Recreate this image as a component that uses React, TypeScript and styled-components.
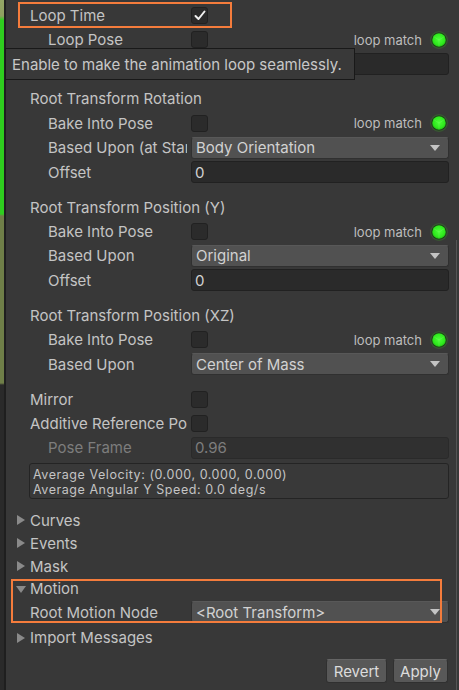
import React from "react";
import styled, { createGlobalStyle } from "styled-components";

const Global = createGlobalStyle`
  html, body { margin: 0; padding: 0; background: #383838; }
  body { font-family: Inter, "Noto Sans", sans-serif; color: #c4c4c4; }
  * { box-sizing: border-box; }
`;

const App = styled.div`
  position: relative;
  display: flex;
  width: 459px;
  height: 690px;
  overflow: hidden;
  background: #383838;
  font-size: 15px;
`;

const LeftStrip = styled.div`
  width: 4px;
  flex: none;
  background: linear-gradient(
    to bottom,
    #93a565 0px,
    #8fa060 16px,
    #2fce1f 20px,
    #2fce1f 214px,
    #6f7f48 216px,
    #6f7f48 383px,
    #2a2a2a 385px,
    #2a2a2a 690px
  );
`;

const LeftEdge = styled.div`
  width: 2px;
  flex: none;
  background: #1f1f1f;
`;

const Panel = styled.div`
  flex: 1;
  display: flex;
  flex-direction: column;
  padding-top: 3px;
`;

const ScrollBar = styled.div`
  width: 3px;
  flex: none;
  display: flex;
  flex-direction: column;
  &::before {
    content: "";
    height: 240px;
  }
`;

const ScrollThumb = styled.div`
  flex: 1;
  width: 1px;
  background: #555555;
`;

const Row = styled.div<{ $gap?: boolean }>`
  display: grid;
  grid-template-columns: 185px 1fr;
  align-items: center;
  height: 24.4px;
  padding-right: 7px;
  margin-top: ${(p) => (p.$gap ? 10.6 : 0)}px;
`;

const Label = styled.div<{ $indent: number; $dim?: boolean }>`
  padding-left: ${(p) => p.$indent}px;
  margin-right: 4px;
  white-space: nowrap;
  overflow: hidden;
  color: ${(p) => (p.$dim ? "#7d7d7d" : "#c4c4c4")};
`;

const Header = styled.div`
  height: 24.4px;
  display: flex;
  align-items: center;
  padding-left: 24px;
  margin-top: 10.6px;
`;

const Field = styled.div`
  display: flex;
  align-items: center;
  justify-content: space-between;
  min-width: 0;
`;

const Check = styled.div`
  width: 17px;
  height: 17px;
  border-radius: 3px;
  background: #2b2b2b;
  border: 1px solid #212121;
  display: flex;
  align-items: center;
  justify-content: center;
`;

const LoopMatch = styled.div`
  display: flex;
  align-items: center;
  gap: 8px;
  font-size: 13px;
  color: #bdbdbd;
  margin-right: 1px;
`;

const Dropdown = styled.div`
  flex: 1;
  height: 22px;
  border-radius: 3px;
  background: #515151;
  border: 1px solid #303030;
  border-top-color: #585858;
  display: flex;
  align-items: center;
  justify-content: space-between;
  padding: 0 8px 0 4px;
  color: #d2d2d2;
`;

const Input = styled.div<{ $disabled?: boolean }>`
  flex: 1;
  height: 22px;
  border-radius: 3px;
  background: ${(p) => (p.$disabled ? "#303030" : "#2a2a2a")};
  border: 1px solid ${(p) => (p.$disabled ? "#2a2a2a" : "#212121")};
  display: flex;
  align-items: center;
  padding: 0 3px;
  color: ${(p) => (p.$disabled ? "#7d7d7d" : "#d2d2d2")};
`;

const InfoBox = styled.div`
  margin: 3px 7px 0 23px;
  height: 36px;
  border-radius: 3px;
  background: #393939;
  border: 1px solid #242424;
  padding: 3px 3px;
  font-size: 12.5px;
  line-height: 15px;
  color: #c4c4c4;
  letter-spacing: 0.55px;
  white-space: nowrap;
`;

const Foldouts = styled.div`
  margin-top: 10px;
  display: flex;
  flex-direction: column;
`;

const Foldout = styled.div<{ $gap?: boolean }>`
  height: 22.8px;
  display: flex;
  align-items: center;
  padding-left: 10px;
  gap: 4px;
  margin-top: ${(p) => (p.$gap ? 2 : 0)}px;
`;

const Buttons = styled.div`
  display: flex;
  justify-content: flex-end;
  gap: 6px;
  padding-right: 8px;
  margin-top: 10px;
`;

const Button = styled.div<{ $w: number }>`
  width: ${(p) => p.$w}px;
  height: 24px;
  border-radius: 3px;
  background: #585858;
  border: 1px solid #303030;
  border-top-color: #656565;
  display: flex;
  align-items: center;
  justify-content: center;
  color: #dcdcdc;
`;

const Tooltip = styled.div`
  position: absolute;
  left: 5px;
  top: 48px;
  width: 350px;
  height: 32px;
  background: #393939;
  border: 1px solid #191919;
  display: flex;
  align-items: center;
  padding-left: 6px;
  color: #c8c8c8;
  white-space: nowrap;
`;

const Highlight = styled.div<{ $x: number; $y: number; $w: number; $h: number }>`
  position: absolute;
  left: ${(p) => p.$x}px;
  top: ${(p) => p.$y}px;
  width: ${(p) => p.$w}px;
  height: ${(p) => p.$h}px;
  border: 2px solid #f47c3c;
  pointer-events: none;
`;

const CheckMark = () => (
  <svg width="12" height="11" viewBox="0 0 12 11">
    <path d="M1.5 6 L4.5 9 L10.5 1.5" fill="none" stroke="#f0f0f0" strokeWidth="2" strokeLinecap="round" strokeLinejoin="round" />
  </svg>
);

const Dot = () => (
  <svg width="18" height="18" viewBox="0 0 18 18">
    <defs>
      <radialGradient id="dg" cx="50%" cy="45%" r="55%">
        <stop offset="0%" stopColor="#4cff38" />
        <stop offset="75%" stopColor="#2ee81c" />
        <stop offset="100%" stopColor="#1fb812" />
      </radialGradient>
    </defs>
    <circle cx="9" cy="9" r="9" fill="#3a7a2c" opacity="0.45" />
    <circle cx="9" cy="9" r="7.6" fill="#1a3a16" />
    <circle cx="9" cy="9" r="6.8" fill="url(#dg)" />
    <path d="M9 9 L9 15.5 M9 9 L3.5 5.5 M9 9 L14.5 5.5" stroke="#8aff78" strokeWidth="0.6" opacity="0.45" />
  </svg>
);

const ArrowDown = () => (
  <svg width="10" height="6" viewBox="0 0 10 6">
    <path d="M0 0 H10 L5 6 Z" fill="#c4c4c4" />
  </svg>
);

const Tri = ({ open }: { open?: boolean }) =>
  open ? (
    <svg width="10" height="10" viewBox="0 0 10 10">
      <path d="M0 2 H10 L5 9 Z" fill="#8a8a8a" />
    </svg>
  ) : (
    <svg width="10" height="10" viewBox="0 0 10 10">
      <path d="M1 0 L9 5 L1 10 Z" fill="#8a8a8a" />
    </svg>
  );

const CheckRow = ({ label, indent, checked, loop, gap }: { label: string; indent: number; checked?: boolean; loop?: boolean; gap?: boolean }) => (
  <Row $gap={gap}>
    <Label $indent={indent}>{label}</Label>
    <Field>
      <Check>{checked && <CheckMark />}</Check>
      {loop && (
        <LoopMatch>
          loop match
          <Dot />
        </LoopMatch>
      )}
    </Field>
  </Row>
);

const DropRow = ({ label, value, indent = 42 }: { label: string; value: string; indent?: number }) => (
  <Row>
    <Label $indent={indent}>{label}</Label>
    <Field>
      <Dropdown>
        <span>{value}</span>
        <ArrowDown />
      </Dropdown>
    </Field>
  </Row>
);

const InputRow = ({ label, value, indent = 42, disabled }: { label: string; value: string; indent?: number; disabled?: boolean }) => (
  <Row>
    <Label $indent={indent} $dim={disabled}>{label}</Label>
    <Field>
      <Input $disabled={disabled}>{value}</Input>
    </Field>
  </Row>
);

export default function Root() {
  return (
    <>
      <Global />
      <App>
        <LeftStrip />
        <LeftEdge />
        <Panel>
          <CheckRow label="Loop Time" indent={24} checked />
          <CheckRow label="Loop Pose" indent={42} loop />
          <InputRow label="" value="" />

          <Header>Root Transform Rotation</Header>
          <CheckRow label="Bake Into Pose" indent={42} loop />
          <DropRow label="Based Upon (at Start)" value="Body Orientation" />
          <InputRow label="Offset" value="0" />

          <Header>Root Transform Position (Y)</Header>
          <CheckRow label="Bake Into Pose" indent={42} loop />
          <DropRow label="Based Upon" value="Original" />
          <InputRow label="Offset" value="0" />

          <Header>Root Transform Position (XZ)</Header>
          <CheckRow label="Bake Into Pose" indent={42} loop />
          <DropRow label="Based Upon" value="Center of Mass" />

          <CheckRow label="Mirror" indent={24} gap />
          <CheckRow label="Additive Reference Pose" indent={24} />
          <InputRow label="Pose Frame" value="0.96" disabled />

          <InfoBox>
            Average Velocity: (0.000, 0.000, 0.000)
            <br />
            Average Angular Y Speed: 0.0 deg/s
          </InfoBox>

          <Foldouts>
            <Foldout><Tri />Curves</Foldout>
            <Foldout><Tri />Events</Foldout>
            <Foldout><Tri />Mask</Foldout>
            <Foldout><Tri open />Motion</Foldout>
            <DropRow label="Root Motion Node" value="<Root Transform>" indent={24} />
            <Foldout $gap><Tri />Import Messages</Foldout>
          </Foldouts>

          <Buttons>
            <Button $w={61}>Revert</Button>
            <Button $w={55}>Apply</Button>
          </Buttons>
        </Panel>
        <ScrollBar>
          <ScrollThumb />
        </ScrollBar>

        <Tooltip>Enable to make the animation loop seamlessly.</Tooltip>
        <Highlight $x={18} $y={2} $w={214} $h={26} />
        <Highlight $x={11} $y={579} $w={431} $h={44} />
      </App>
    </>
  );
}
